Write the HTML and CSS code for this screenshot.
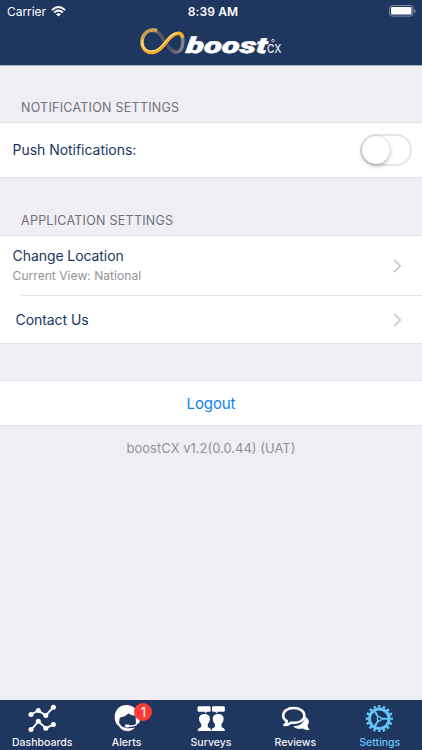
FILE: index.html
```html
<!DOCTYPE html>
<html lang="en">
<head>
<meta charset="utf-8">
<title>boostCX Settings</title>
<link rel="stylesheet" href="styles.css">
</head>
<body>
<div class="app">
  <header class="header">
    <div class="status">
      <div class="carrier"><span>Carrier</span>
        <svg width="15" height="11" viewBox="0 0 15 11" fill="none" stroke="#fff" stroke-width="1.9"><path d="M.9 4.1Q7.5-2 14.1 4.1M3.2 6.5Q7.5 2.6 11.8 6.5"/><path d="M7.5 10.6 5.1 8.2Q7.5 6.3 9.9 8.2Z" fill="#fff" stroke="none"/></svg>
      </div>
      <div class="time">8:39 AM</div>
      <svg class="battery" width="27" height="12" viewBox="0 0 27 12"><rect x=".5" y=".5" width="23.5" height="10.6" rx="2.6" fill="none" stroke="#8290af"/><rect x="2" y="2" width="20.5" height="7.6" rx="1.1" fill="#fff"/><path d="M25.2 4v4q1.4-.6 1.4-2t-1.4-2z" fill="#8290af"/></svg>
    </div>
    <svg class="logo" width="160" height="38" viewBox="0 0 160 38">
      <defs>
        <linearGradient id="gold" x1="0" y1="0" x2="1" y2="1"><stop offset="0" stop-color="#a48b57"/><stop offset=".3" stop-color="#f5bd40"/><stop offset=".6" stop-color="#f4ae24"/><stop offset="1" stop-color="#e7a233"/></linearGradient>
        <linearGradient id="steel"><stop offset="0" stop-color="#777775"/><stop offset=".5" stop-color="#45495b"/><stop offset="1" stop-color="#85858a"/></linearGradient>
      </defs>
      <path d="M11 4.7C25 1.5 25 25 37 26.2C44 25.8 44.6 16 43.3 9" fill="none" stroke="url(#steel)" stroke-width="3.5"/>
      <path d="M18 4.6C10 1.5 3 8 3 16C3 23 8 27.1 14 26.5C25 25.5 28 8.4 39 7.3Q43 7 43.5 12" fill="none" stroke="url(#gold)" stroke-width="3.5"/>
      <path d="M3.1 14C3 22 8 25.5 13 25C24 24 28 8 38 6.9" fill="none" stroke="#fff0bd" stroke-width="1"/>
      <text class="wordmark" transform="translate(46.5 27) skewX(-6)" textLength="81" lengthAdjust="spacingAndGlyphs">boost</text>
      <text class="cx" x="128" y="26.5" textLength="14.5" lengthAdjust="spacingAndGlyphs">CX</text>
      <circle cx="134" cy="14.6" r="1.3" fill="none" stroke="#d5dae5" stroke-width=".9"/>
    </svg>
  </header>
  <main class="main">
    <h2 class="heading notification">NOTIFICATION SETTINGS</h2>
    <section class="group push">
      <span class="push-label">Push Notifications:</span>
      <span class="switch"><span class="knob"></span></span>
    </section>
    <h2 class="heading application">APPLICATION SETTINGS</h2>
    <section class="group links">
      <div class="row location">
        <div><div class="change">Change Location</div><div class="current">Current View: National</div></div>
        <svg class="chevron" width="9" height="14" viewBox="0 0 9 14"><path d="m1.2 1 6 6-6 6"/></svg>
      </div>
      <div class="row contact"><span class="contact-label">Contact Us</span>
        <svg class="chevron" width="9" height="14" viewBox="0 0 9 14"><path d="m1.2 1 6 6-6 6"/></svg>
      </div>
    </section>
    <section class="group logout"><span>Logout</span></section>
    <p class="version">boostCX v1.2(0.0.44) (UAT)</p>
  </main>
  <nav class="tabs">
    <div class="tab">
      <svg width="32" height="32" viewBox="0 0 32 32" fill="none" stroke="#fff" stroke-width="1.9"><path d="M5 14.5 12.3 10.5 19.8 15.5 27.4 7.2M5 30 12.3 21.3 19.8 28.2 27.4 24.6"/><g fill="#fff" stroke="none"><circle cx="5" cy="14.5" r="2.5"/><circle cx="12.3" cy="10.5" r="2.5"/><circle cx="19.8" cy="15.5" r="2.5"/><circle cx="27.4" cy="7.2" r="2.5"/><circle cx="5" cy="29.5" r="2.5"/><circle cx="12.3" cy="21.3" r="2.5"/><circle cx="19.8" cy="28.2" r="2.5"/><circle cx="27.4" cy="24.6" r="2.5"/></g></svg>
      <span class="dash">Dashboards</span>
    </div>
    <div class="tab">
      <svg width="32" height="32" viewBox="0 0 32 32"><path d="M5.5 24C2.5 18 3.2 11 8.3 7.2C13.5 3.4 23.5 4.5 26.3 12C28 15 28 18 27.4 21L25 24L24.6 15.5Q20.5 16 17.4 13.3Q14 17.2 9 17.5Q7.2 23 9.3 26Q7 26 5.5 24Z" fill="#fff"/><path d="M6.8 24.5Q10 30.5 15.5 31Q20.5 31.3 24 27.4Q20 28.6 15 28Q10 27 8.7 23.5Z" fill="#fff"/><path d="M26.3 21Q26.5 26 20.5 26H16" fill="none" stroke="#fff" stroke-width="1.5"/><rect x="13.8" y="24.6" width="4.8" height="2.8" rx="1.4" fill="#fff"/><path d="M25 17h2q1.7 0 1.7 2v2.5q0 2-2 2H25z" fill="#fff"/></svg>
      <span class="alerts">Alerts</span><b class="badge">1</b>
    </div>
    <div class="tab">
      <svg width="32" height="32" viewBox="0 0 32 32" fill="#fff"><path d="M3.6 6.3h11q1 0 1 1v3.4q0 1-1 1h-2.4L10 13.4V11.7H3.6q-1 0-1-1V7.3q0-1 1-1zM18 6.3h10.8q1 0 1 1v3.4q0 1-1 1h-6.5v1.7l-2.2-1.7H18q-1 0-1-1V7.3q0-1 1-1z"/><g id="person"><path d="M9.5 14c3.7 0 5.6 2.2 5.4 5.2-.1 2-1.1 3.5-2.1 4.6v3.2l2.2 1.3q1.2.6 1.2 2.7H2.7q0-2.1 1.2-2.7l2.3-1.3v-3.2c-1-1.1-2-2.6-2.1-4.6C3.9 16.2 5.8 14 9.5 14z"/></g><use href="#person" x="13.7"/></svg>
      <span class="surveys">Surveys</span>
    </div>
    <div class="tab">
      <svg width="32" height="32" viewBox="0 0 32 32"><path d="M26.4 16.7C29.8 19 31.1 22.1 28.5 25.3Q28.6 27.8 30.8 29.8Q27 30.3 24 28.4C20 29.5 16 28.5 14 26.2C20.4 26.6 25.4 22.8 26.4 16.7Z" fill="#fff"/><path d="M14.8 8C8 8 4.2 11.3 4.2 15.4C4.2 17.8 5.6 19.9 7.9 21.2Q7.5 23.6 5.4 25.1Q9.5 25.1 12 22.6C20.3 23.8 25.4 20.2 25.4 15.4C25.4 11.3 21 8 14.8 8Z" fill="#1f365f" stroke="#fff" stroke-width="2.5" stroke-linejoin="round"/></svg>
      <span class="reviews">Reviews</span>
    </div>
    <div class="tab active">
      <svg width="32" height="32" viewBox="0 0 32 32" fill="none" stroke="#67c4fa"><circle cx="15.3" cy="18.8" r="12.3" stroke-width="2.6" stroke-dasharray="2.5 2.33" transform="rotate(-96.5 15.3 18.8)"/><circle cx="15.3" cy="18.8" r="9.8" stroke-width="3"/><circle cx="15.3" cy="18.8" r="2" stroke-width="1.2"/><path d="m14.2 16.9-4.4-7.2M14.2 20.7l-4.4 7.2M17.5 18.8h8" stroke-width="2"/></svg>
      <span class="settings">Settings</span>
    </div>
  </nav>
</div>
</body>
</html>
```
FILE: styles.css
```css
* { box-sizing: border-box; }
body { margin: 0; font-family: Inter, "Liberation Sans", sans-serif; background: #efeef4; }
.app { width: 422px; height: 750px; display: flex; flex-direction: column; overflow: hidden; }
span, .change, .current { white-space: nowrap; }
.header { height: 66px; background: #1f365f; color: #fff; border-bottom: 1px solid #a7afbf; }
.status { height: 22px; display: grid; grid-template-columns: 1fr 1fr 1fr; align-items: center; padding: 0 6px 0 7px; }
.carrier { display: flex; align-items: center; gap: 5px; font-size: 12px; letter-spacing: -.05px; }
.time { text-align: center; font-size: 12px; font-weight: 600; letter-spacing: .15px; padding-left: 3px; }
.battery { justify-self: end; }
.logo { display: block; margin: 4px auto 0 139px; overflow: visible; }
.wordmark { font: italic 900 22px Roboto, sans-serif; fill: #fff; stroke: #fff; stroke-width: .5px; }
.cx { font: 500 12px Inter, sans-serif; fill: #e5e8ef; }
.main { flex: 1; }
.heading { margin: 0; padding-left: 21px; font-size: 12.5px; font-weight: 400; color: #717176; line-height: 18px; letter-spacing: .26px; }
.notification { height: 56px; padding-top: 33px; }
.application { height: 57px; padding-top: 34px; }
.group { background: #fff; border-top: 1px solid #e2e2e6; border-bottom: 1px solid #e2e2e6; color: #18365f; }
.push { height: 56px; display: flex; align-items: center; justify-content: space-between; padding: 0 10px 1px 12.5px; font-size: 14px; letter-spacing: -.03px; }
.switch { width: 52px; height: 32px; border: 2px solid #e4e4e4; border-radius: 16px; }
.knob { display: block; width: 28px; height: 28px; border-radius: 50%; background: #fff; box-shadow: 0 2px 4px #0004, 0 0 1px #0004; }
.links { height: 109px; font-size: 14px; letter-spacing: -.08px; }
.row { display: flex; align-items: center; justify-content: space-between; padding-right: 20px; }
.location { height: 59px; padding-left: 12.6px; }
.change { line-height: 20px; }
.current { font-size: 12px; line-height: 20px; color: #929297; letter-spacing: .05px; }
.contact { height: 48px; margin-left: 21px; border-top: 1px solid #e2e2e5; }
.contact-label { margin-left: -5.4px; }
.chevron { fill: none; stroke: #c4c4c9; stroke-width: 1.7; }
.logout { height: 46px; margin-top: 36px; display: flex; align-items: center; justify-content: center; color: #1480ef; font-size: 15px; letter-spacing: -.1px; }
.version { margin: 12px 0 0; text-align: center; color: #929297; font-size: 13px; line-height: 20px; }
.tabs { height: 50px; background: #1f365f; display: grid; grid-template-columns: repeat(5, 1fr); color: #f2f4f9; }
.tab { position: relative; display: flex; flex-direction: column; align-items: center; font-size: 10.5px; font-weight: 500; }
.tab span { line-height: 14px; margin-top: 4px; }
.tab svg { flex: none; }
.active { color: #67c4fa; }
.badge { position: absolute; left: 50px; top: 3px; width: 18px; height: 18px; border-radius: 50%; background: #fc3b36; color: #fff; text-align: center; font-size: 13px; line-height: 18px; font-weight: 400; }
```
